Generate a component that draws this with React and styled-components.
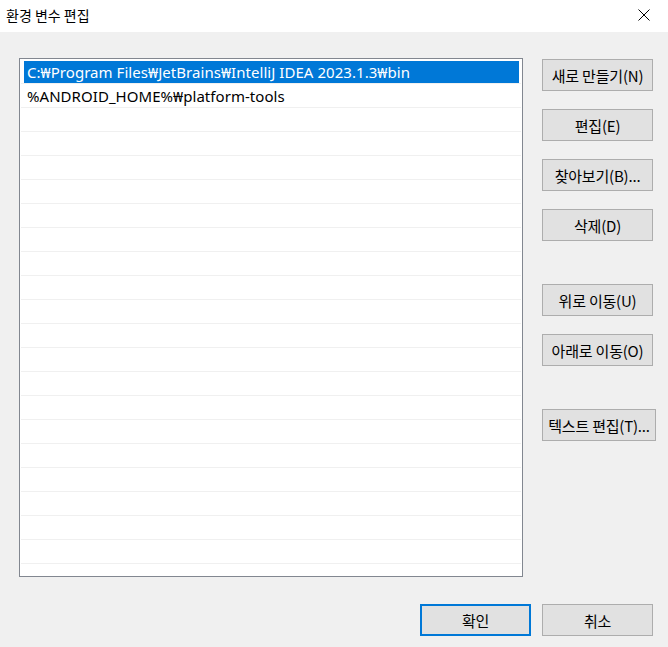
import React, { useState } from 'react'
import styled, { createGlobalStyle } from 'styled-components'

const GlobalStyle = createGlobalStyle`
  html, body {
    margin: 0;
    padding: 0;
    background: #f0f0f0;
  }
  body {
    font-family: "Noto Sans", "Noto Sans CJK KR", sans-serif;
  }
`

const Window = styled.div`
  width: 668px;
  height: 647px;
  display: flex;
  flex-direction: column;
  background: #f0f0f0;
  overflow: hidden;
`

const TitleBar = styled.div`
  height: 32px;
  flex: 0 0 32px;
  background: #ffffff;
  display: flex;
  align-items: center;
  justify-content: space-between;
  padding: 0 12px 0 6px;
  box-sizing: border-box;
`

const Title = styled.span`
  font-family: "Noto Sans CJK KR", sans-serif;
  font-size: 14px;
  color: #000;
  margin-top: -3px;
`

const CloseButton = styled.button`
  width: 24px;
  height: 24px;
  border: none;
  background: transparent;
  padding: 0;
  display: flex;
  align-items: center;
  justify-content: center;
  margin-top: -3px;
`

const Body = styled.div`
  flex: 1;
  padding: 26px 15px 0 19px;
  display: flex;
  flex-direction: column;
`

const Main = styled.div`
  display: flex;
  gap: 19px;
`

const ListBox = styled.div`
  width: 504px;
  flex: 0 0 504px;
  height: 519px;
  box-sizing: border-box;
  border: 1px solid #828790;
  background: #ffffff;
  padding: 1px 1px 0 1px;
  overflow: hidden;
`

const Row = styled.div`
  height: 24px;
  box-sizing: border-box;
  border-bottom: 1px solid #f0f0f0;
  padding: 1px 2px 0 3px;
  display: flex;
`

const Cell = styled.div`
  flex: 1;
  height: 22px;
  display: flex;
  align-items: center;
  padding-left: 3px;
  font-size: 15px;
  letter-spacing: 0.05px;
  white-space: nowrap;
  color: ${p => (p.selected ? '#ffffff' : '#000000')};
  background: ${p => (p.selected ? '#0078d7' : 'transparent')};
`

const ButtonCol = styled.div`
  width: 111px;
  flex: 0 0 111px;
  display: flex;
  flex-direction: column;
  align-items: flex-start;
  padding-top: 1px;
`

const Button = styled.button`
  width: ${p => p.w || 111}px;
  flex: 0 0 auto;
  height: 32px;
  margin-top: ${p => (p.spaced ? 43 : p.first ? 0 : 18)}px;
  box-sizing: border-box;
  border: ${p => (p.primary ? '2px solid #0078d7' : '1px solid #adadad')};
  background: #e1e1e1;
  font-family: "Noto Sans CJK KR", sans-serif;
  font-size: 15px;
  letter-spacing: -0.2px;
  color: #000;
  padding: 0;
  white-space: nowrap;
  display: flex;
  align-items: center;
  justify-content: center;
`

const Footer = styled.div`
  display: flex;
  justify-content: flex-end;
  gap: 11px;
  margin-top: 27px;
`

const paths = [
  'C:₩Program Files₩JetBrains₩IntelliJ IDEA 2023.1.3₩bin',
  '%ANDROID_HOME%₩platform-tools',
]

const actions = [
  { label: '새로 만들기(N)', first: true },
  { label: '편집(E)' },
  { label: '찾아보기(B)...' },
  { label: '삭제(D)' },
  { label: '위로 이동(U)', spaced: true },
  { label: '아래로 이동(O)' },
  { label: '텍스트 편집(T)...', spaced: true, w: 114 },
]

export default function App() {
  const [selected, setSelected] = useState(0)
  const rows = Array.from({ length: 22 }, (_, i) => paths[i] || '')

  return (
    <Window>
      <GlobalStyle />
      <TitleBar>
        <Title>환경 변수 편집</Title>
        <CloseButton aria-label="닫기">
          <svg width="12" height="12" viewBox="0 0 12 12">
            <path d="M0.5 0.5 L11.5 11.5 M11.5 0.5 L0.5 11.5" stroke="#000" strokeWidth="1" fill="none" />
          </svg>
        </CloseButton>
      </TitleBar>
      <Body>
        <Main>
          <ListBox>
            {rows.map((text, i) => (
              <Row key={i} onClick={() => text && setSelected(i)}>
                <Cell selected={i === selected}>{text}</Cell>
              </Row>
            ))}
          </ListBox>
          <ButtonCol>
            {actions.map(a => (
              <Button key={a.label} first={a.first} spaced={a.spaced} w={a.w}>
                {a.label}
              </Button>
            ))}
          </ButtonCol>
        </Main>
        <Footer>
          <Button first primary>확인</Button>
          <Button first>취소</Button>
        </Footer>
      </Body>
    </Window>
  )
}
